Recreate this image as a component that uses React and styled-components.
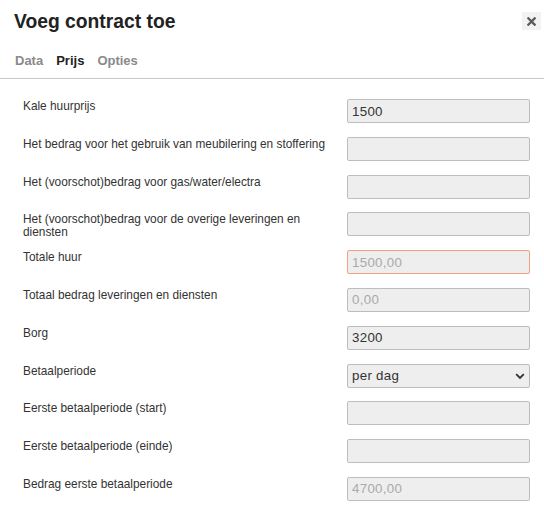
import React from 'react';
import styled, { createGlobalStyle } from 'styled-components';

const GlobalStyle = createGlobalStyle`
  * { box-sizing: border-box; }
  body {
    margin: 0;
    background: #fff;
    font-family: "Liberation Sans", Arial, sans-serif;
    color: #333;
  }
`;

const Modal = styled.div`
  width: 544px;
  background: #fff;
`;

const Header = styled.div`
  display: flex;
  align-items: flex-start;
  justify-content: space-between;
  padding: 10px 3px 0 14px;
`;

const Title = styled.h2`
  margin: 0;
  font-size: 19.3px;
  font-weight: bold;
  color: #222;
  line-height: 24px;
`;

const CloseButton = styled.button`
  width: 19px;
  height: 18px;
  margin-top: 2px;
  border: none;
  background: #f2f2f2;
  padding: 0;
  display: flex;
  align-items: center;
  justify-content: center;
  cursor: pointer;
`;

const Tabs = styled.div`
  display: flex;
  gap: 13px;
  padding: 0 15px;
  margin-top: 19px;
  height: 26px;
  border-bottom: 1px solid #c8c8c8;
`;

const Tab = styled.div`
  font-size: 13px;
  font-weight: bold;
  line-height: 16px;
  color: ${p => (p.$active ? '#222' : '#8a8a8a')};
`;

const Form = styled.div`
  display: grid;
  grid-template-columns: 310px 183px;
  column-gap: 14px;
  row-gap: 13.8px;
  padding: 20px 14px 20px 23px;
`;

const Label = styled.label`
  font-size: 11.85px;
  line-height: 13px;
  color: #333;
  padding-top: 1px;
  margin-bottom: -8px;
`;

const Input = styled.input`
  width: 183px;
  height: 24px;
  margin: 0;
  padding: 0 4px;
  font-family: "Liberation Sans", Arial, sans-serif;
  font-size: 13.3px;
  letter-spacing: 0.3px;
  color: ${p => (p.disabled ? '#aaa' : '#333')};
  background: #eeeeee;
  border: 1px solid ${p => (p.$error ? '#f4a07e' : '#bdbdbd')};
  border-radius: 2px;
  outline: none;
  &:disabled { -webkit-text-fill-color: #aaa; }
`;

const SelectWrap = styled.div`
  position: relative;
  width: 183px;
  height: 24px;
`;

const Select = styled.select`
  appearance: none;
  width: 100%;
  height: 100%;
  margin: 0;
  padding: 0 4px;
  font-family: "Liberation Sans", Arial, sans-serif;
  font-size: 13.3px;
  letter-spacing: 0.3px;
  color: #333;
  background: #eeeeee;
  border: 1px solid #bdbdbd;
  border-radius: 2px;
  outline: none;
`;

const Chevron = styled.svg`
  position: absolute;
  right: 5px;
  top: 9px;
  pointer-events: none;
`;

const rows = [
  { label: 'Kale huurprijs', value: '1500' },
  { label: 'Het bedrag voor het gebruik van meubilering en stoffering', value: '' },
  { label: 'Het (voorschot)bedrag voor gas/water/electra', value: '' },
  { label: 'Het (voorschot)bedrag voor de overige leveringen en diensten', value: '' },
  { label: 'Totale huur', value: '1500,00', disabled: true, error: true },
  { label: 'Totaal bedrag leveringen en diensten', value: '0,00', disabled: true },
  { label: 'Borg', value: '3200' },
  { label: 'Betaalperiode', select: true },
  { label: 'Eerste betaalperiode (start)', value: '' },
  { label: 'Eerste betaalperiode (einde)', value: '' },
  { label: 'Bedrag eerste betaalperiode', value: '4700,00', disabled: true },
];

export default function App() {
  return (
    <Modal>
      <GlobalStyle />
      <Header>
        <Title>Voeg contract toe</Title>
        <CloseButton aria-label="Sluiten">
          <svg width="9" height="9" viewBox="0 0 10 10">
            <path d="M1.5 1.5 L8.5 8.5 M8.5 1.5 L1.5 8.5" stroke="#5a5a5a" strokeWidth="2.5" strokeLinecap="square" />
          </svg>
        </CloseButton>
      </Header>
      <Tabs>
        <Tab>Data</Tab>
        <Tab $active>Prijs</Tab>
        <Tab>Opties</Tab>
      </Tabs>
      <Form>
        {rows.map(r => (
          <React.Fragment key={r.label}>
            <Label>{r.label}</Label>
            {r.select ? (
              <SelectWrap>
                <Select defaultValue="dag">
                  <option value="dag">per dag</option>
                  <option value="week">per week</option>
                  <option value="maand">per maand</option>
                </Select>
                <Chevron width="10" height="7" viewBox="0 0 10 7">
                  <path d="M1.2 1.2 L5 5 L8.8 1.2" fill="none" stroke="#333" strokeWidth="1.8" />
                </Chevron>
              </SelectWrap>
            ) : (
              <Input
                defaultValue={r.value}
                disabled={r.disabled}
                $error={r.error}
              />
            )}
          </React.Fragment>
        ))}
      </Form>
    </Modal>
  );
}
